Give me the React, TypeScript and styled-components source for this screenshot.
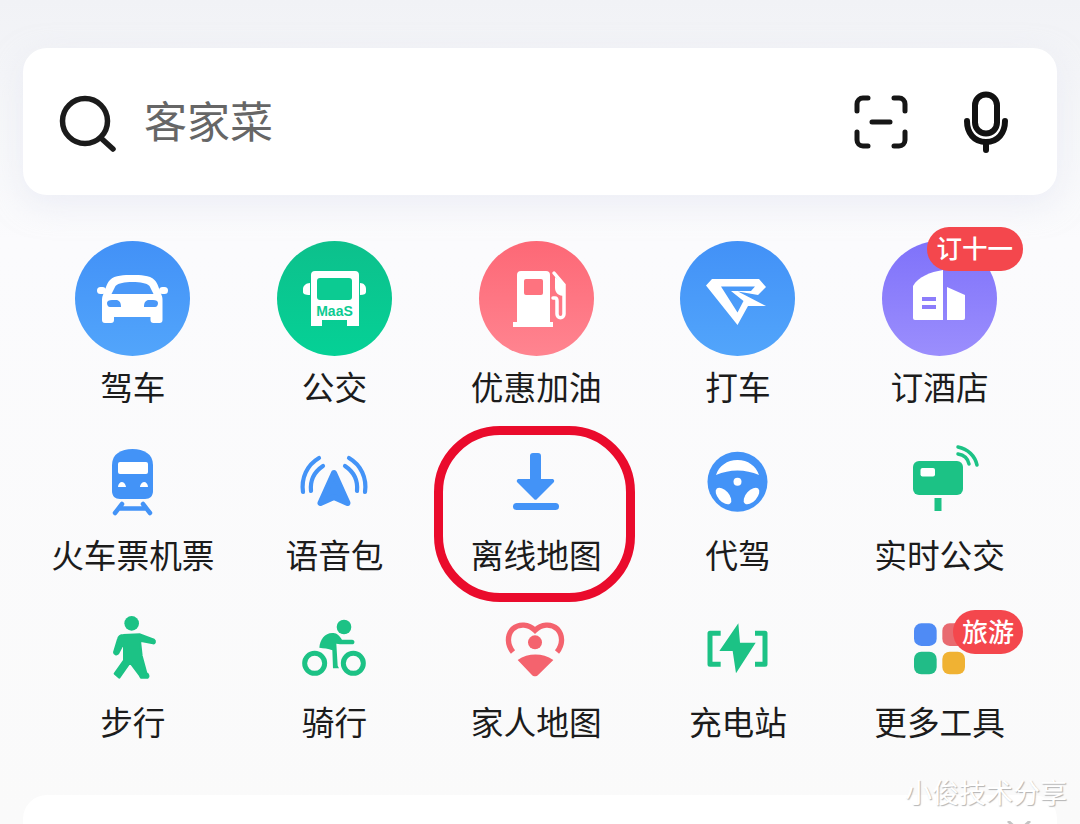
import React from "react";
import styled, { createGlobalStyle } from "styled-components";

const GlobalStyle = createGlobalStyle`
  html, body {
    margin: 0;
    height: 824px;
    overflow: hidden;
    font-family: "Noto Sans CJK SC", "Noto Sans", sans-serif;
  }
`;

const GREEN = "#1cc285";
const BLUE = "#4393f7";

//Icones dentro dos discos (viewBox 115)
const CarIcon = () => (
  <DiscSvg viewBox="0 0 115 115">
    <rect x="22" y="46" width="9" height="7" rx="3.5" fill="#fff" />
    <rect x="84" y="46" width="9" height="7" rx="3.5" fill="#fff" />
    <path fill="#fff" d="M57.500 34c8 0 17 0 22 5 2 2 3 4 4 7l3 8c1 2 1 4 1 6v19a3 3 0 0 1-3 3h-6a3 3 0 0 1-3-3v-3H39v3a3 3 0 0 1-3 3h-6a3 3 0 0 1-3-3V60c0-2 0-4 1-6l3-8c1-3 2-5 4-7 5-5 14-5 22.500-5z" />
    <path fill="#4a98f8" d="M57.500 41c8 0 14 1 17 4l4 8H36.500l4-8c3-3 9-4 17-4z" />
    <path fill="#4a98f8" d="M32 62c0-2 2-3 5-3h4c3 0 5 2 5 7H35c-2 0-3-2-3-4zM83 62c0-2-2-3-5-3h-4c-3 0-5 2-5 7h11c2 0 3-2 3-4z" />
  </DiscSvg>
);

const BusIcon = () => (
  <DiscSvg viewBox="0 0 115 115">
    <path fill="#fff" d="M33 42c-4 0-7 3-7 6v3c0 2 2 3 7 3zM83 42c4 0 6 3 6 6v3c0 2-2 3-6 3z" />
    <path fill="#fff" d="M38 30h40a4 4 0 0 1 4 4v51H70v-6H45v6H34V34a4 4 0 0 1 4-4z" />
    <rect x="40" y="37" width="35" height="22" rx="3" fill="#0ccb92" />
    <BusText x="57.5" y="74.500">MaaS</BusText>
  </DiscSvg>
);

const FuelIcon = () => (
  <DiscSvg viewBox="0 0 115 115">
    <path fill="#fff" d="M42 30h25a4 4 0 0 1 4 4v47h3v5H34v-5h4V34a4 4 0 0 1 4-4z" />
    <rect x="45" y="38" width="19" height="16" rx="2" fill="#fe737f" />
    <path fill="none" stroke="#fff" strokeWidth="3.5" strokeLinecap="round" d="M74 57h2c1.500 0 2 1 2 3v13c0 5 7 5 7 0V44l-10-12" />
    <path fill="#fff" d="M76 36l9 8v11c-5 0-9-3-9-8z" />
  </DiscSvg>
);

const TaxiIcon = () => (
  <DiscSvg viewBox="0 0 115 115">
    <path fill="#fff" fillRule="evenodd" d="M26 44.500L32 38h47l7 8-8 8-20-3.500L86 65H68L57.500 84zM41 45.500l16.500 26 6-11.500L51 50h20l4-4.500z" />
  </DiscSvg>
);

const HotelIcon = () => (
  <DiscSvg viewBox="0 0 115 115">
    <path fill="#fff" d="M31 45C36 36 48 31 61 29v50H33a2 2 0 0 1-2-2z" />
    <path fill="#fff" d="M65 46l18 8v23a2 2 0 0 1-2 2H65z" />
    <rect x="40" y="56" width="14" height="4" fill="#8c7dfb" />
    <rect x="40" y="64" width="14" height="4" fill="#8c7dfb" />
  </DiscSvg>
);

//Icones pequenos (slot de 80x80, viewBox nas coordenadas do recorte)
const TrainIcon = () => (
  <SmallSvg viewBox="0 0 80 80">
    <path fill={BLUE} d="M19 25C19 14 28 9 39.500 9S60 14 60 25v26c0 5-3 8-8 8H27c-5 0-8-3-8-8z" />
    <rect x="25" y="22" width="30" height="12" rx="2" fill="#fff" />
    <path fill="#fff" d="M25 47c0-3 2-5 4-5s4 3 4 5zM47 47c0-2 2-5 4-5s4 2 4 5z" />
    <path fill="none" stroke={BLUE} strokeWidth="4.500" strokeLinecap="round" d="M29 64l-7 9M50 64l7 9M27 68.500h25" />
  </SmallSvg>
);

const VoiceIcon = () => (
  <SmallSvg viewBox="0 0 80 80">
    <path fill={BLUE} stroke={BLUE} strokeWidth="6" strokeLinejoin="round" d="M39 33L25.500 63 39 57l13.500 6z" />
    <path fill="none" stroke={BLUE} strokeWidth="4.200" strokeLinecap="round" d="M8 52C6 38 12 25 24 18M16 51c-1-10 3-19 12-25M70 52c2-14-4-27-16-34M62 51c1-10-3-19-12-25" />
  </SmallSvg>
);

const DownloadIcon = () => (
  <SmallSvg viewBox="0 0 80 80">
    <path fill={BLUE} d="M34 16a3 3 0 0 1 3-3h5a3 3 0 0 1 3 3v23h11c2 0 3 2 1.500 3.500L41 59a2 2 0 0 1-3 0L21.500 42.500C20 41 21 39 23 39h11z" />
    <rect x="17" y="63" width="46" height="7" rx="3.500" fill={BLUE} />
  </SmallSvg>
);

const WheelIcon = () => (
  <SmallSvg viewBox="0 0 80 80">
    <circle cx="39.500" cy="41.700" r="30" fill={BLUE} />
    <path fill="#fff" d="M18 35c3-9 11-15 21.500-15S58 26 61 35c-7-3-14-4.500-21.500-4.500S25 32 18 35z" />
    <ellipse cx="25.500" cy="56" rx="10" ry="5.500" transform="rotate(48 25.500 56)" fill="#fff" />
    <ellipse cx="53.500" cy="56" rx="10" ry="5.500" transform="rotate(-48 53.500 56)" fill="#fff" />
    <circle cx="39.500" cy="41.700" r="4" fill="#fff" />
  </SmallSvg>
);

const StopIcon = () => (
  <SmallSvg viewBox="0 0 80 80">
    <rect x="13" y="21" width="50" height="34" rx="6" fill={GREEN} />
    <rect x="20.500" y="28" width="14.500" height="8.500" rx="2" fill="#fff" />
    <rect x="34.500" y="58" width="7" height="13" fill={GREEN} />
    <path fill="none" stroke={GREEN} strokeWidth="3.500" strokeLinecap="round" d="M58 7c10 2 17 9 19 18M58 14c6 1 10 5 11 10" />
  </SmallSvg>
);

const WalkIcon = () => (
  <SmallSvg viewBox="9 6 240 240">
    <circle cx="125" cy="55" r="22" fill={GREEN} />
    <path fill={GREEN} stroke={GREEN} strokeWidth="6" strokeLinejoin="round" d="M100 90l50-2 42 16c5 4 3 12-3 11l-39-8 5 45 14 52c6 3 9 10 4 14h-20l-6-10-27-36-32 46-14-12 28-40V112l-18 34c-4 4-12 2-12-4l12-40c2-8 8-12 16-12z" />
  </SmallSvg>
);

const BikeIcon = () => (
  <SmallSvg viewBox="613 6 240 240">
    <circle cx="760" cy="66" r="22" fill={GREEN} />
    <circle cx="672" cy="175" r="30" fill="none" stroke={GREEN} strokeWidth="15" />
    <circle cx="788" cy="175" r="30" fill="none" stroke={GREEN} strokeWidth="15" />
    <path fill={GREEN} d="M686 128c2-26 18-46 42-44 12 1 18 8 26 20h30c10 0 10 14 0 14h-36l-11-2 4 66 4 8h-18l-2-54c-12-6-26-6-39-8z" />
  </SmallSvg>
);

const FamilyIcon = () => (
  <SmallSvg viewBox="18 6 240 240">
    <path fill="none" stroke="#f4636e" strokeWidth="16" d="M69 141C52 120 50 92 68 72c20-18 48-14 67 4 19-18 47-22 67 -4 18 20 16 48-1 69" />
    <circle cx="135" cy="112" r="21" fill="#f4636e" />
    <path fill="#f4636e" d="M83 165c32-22 74-22 107 0l-45 44c-6 6-14 6-20 0z" />
  </SmallSvg>
);

const ChargeIcon = () => (
  <SmallSvg viewBox="624 6 240 240">
    <path fill="none" stroke={GREEN} strokeWidth="15" strokeLinejoin="round" d="M692 85h-32v93h32M795 85h30v93h-30" />
    <path fill={GREEN} d="M745 55l-57 83h40l10 67 59-92h-47z" />
  </SmallSvg>
);

const MoreIcon = () => (
  <SmallSvg viewBox="30 21 240 240">
    <rect x="72" y="70" width="68" height="68" rx="22" fill="#4f8bf5" />
    <rect x="157" y="70" width="68" height="68" rx="22" fill="#e86a70" />
    <rect x="72" y="155" width="68" height="68" rx="22" fill="#21bc87" />
    <rect x="157" y="155" width="68" height="68" rx="22" fill="#f0b233" />
  </SmallSvg>
);

type Tool = {
  label: string;
  icon: React.ReactNode;
  disc?: [string, string];
  badge?: string;
  small?: boolean;
  marked?: boolean;
};

const tools: Tool[] = [
  { label: "驾车", icon: <CarIcon />, disc: ["#4291f7", "#52a5fb"] },
  { label: "公交", icon: <BusIcon />, disc: ["#0dc08c", "#05d196"] },
  { label: "优惠加油", icon: <FuelIcon />, disc: ["#fd6876", "#ff8490"] },
  { label: "打车", icon: <TaxiIcon />, disc: ["#4291f7", "#52a5fb"] },
  { label: "订酒店", icon: <HotelIcon />, disc: ["#7f72fa", "#9b8efd"], badge: "订十一" },
  { label: "火车票机票", icon: <TrainIcon /> },
  { label: "语音包", icon: <VoiceIcon /> },
  { label: "离线地图", icon: <DownloadIcon />, marked: true },
  { label: "代驾", icon: <WheelIcon /> },
  { label: "实时公交", icon: <StopIcon /> },
  { label: "步行", icon: <WalkIcon /> },
  { label: "骑行", icon: <BikeIcon /> },
  { label: "家人地图", icon: <FamilyIcon /> },
  { label: "充电站", icon: <ChargeIcon /> },
  { label: "更多工具", icon: <MoreIcon />, badge: "旅游", small: true },
];

export default function App() {
  return (
    <Page>
      <GlobalStyle />

      <SearchBar>
        <svg width="60" height="60" viewBox="0 0 60 60" fill="none" stroke="#1b1b1b" strokeWidth="5.500" strokeLinecap="round">
          <circle cx="27" cy="29" r="22.500" />
          <path d="M44 47l11 10" />
        </svg>
        <SearchText>客家菜</SearchText>
        <SearchActions>
          <svg width="54" height="54" viewBox="0 0 54 54" fill="none" stroke="#161616" strokeWidth="5" strokeLinecap="round">
            <path d="M3 16V9a6 6 0 0 1 6-6h5M40 3h5a6 6 0 0 1 6 6v7M3 37v8a6 6 0 0 0 6 6h5M40 51h5a6 6 0 0 0 6-6v-8M18 27h18" />
          </svg>
          <svg width="44" height="62" viewBox="0 0 44 62" fill="none" stroke="#111" strokeWidth="6" strokeLinecap="round">
            <rect x="11" y="3.500" width="22" height="39" rx="11" />
            <path d="M3 30c0 12 7 21 19 21s19-9 19-21M22 51v8" />
          </svg>
        </SearchActions>
      </SearchBar>

      <ToolGrid>
        {tools.map((t, idx) => (
          <ToolCell key={idx}>
            <IconSlot>
              {t.disc ? <Disc $from={t.disc[0]} $to={t.disc[1]}>{t.icon}</Disc> : t.icon}
              {t.badge && <Badge $small={t.small}>{t.badge}</Badge>}
            </IconSlot>
            <ToolLabel>{t.label}</ToolLabel>
            {t.marked && <MarkRing />}
          </ToolCell>
        ))}
      </ToolGrid>

      <BottomCard>
        <svg width="26" height="14" viewBox="0 0 26 14" fill="none" stroke="#c4c4c4" strokeWidth="3">
          <path d="M2 0l11 10L24 0" />
        </svg>
      </BottomCard>

      <Watermark>小俊技术分享</Watermark>
    </Page>
  );
}

//Styled Components
const Page = styled.main`
  position: relative;
  width: 1080px;
  height: 824px;
  overflow: hidden;
  box-sizing: border-box;
  padding: 48px 23px 0;
  background: linear-gradient(#f1f2f6 0, #f7f8fa 150px, #fbfbfd 240px, #fafafa 100%);
`;

const SearchBar = styled.section`
  display: flex;
  align-items: center;
  height: 147px;
  box-sizing: border-box;
  padding: 0 49px 0 35px;
  background: #fff;
  border-radius: 24px;
  box-shadow: 0 10px 30px rgba(225, 228, 242, 0.5);
`;

const SearchText = styled.span`
  margin: -5px 0 0 26px;
  font-size: 43px;
  line-height: 60px;
  color: #666;
`;

const SearchActions = styled.div`
  margin-left: auto;
  display: flex;
  align-items: center;
  gap: 56px;
`;

const ToolGrid = styled.section`
  margin: 46px 0 0 9px;
  display: grid;
  grid-template-columns: repeat(5, 201.7px);
  grid-auto-rows: 167.5px;
`;

const ToolCell = styled.div`
  position: relative;
  display: flex;
  flex-direction: column;
  align-items: center;
`;

const IconSlot = styled.div`
  position: relative;
  width: 115px;
  height: 115px;
  display: flex;
  justify-content: center;
  align-items: flex-end;
`;

const Disc = styled.div<{ $from: string; $to: string }>`
  width: 115px;
  height: 115px;
  border-radius: 50%;
  background: linear-gradient(${(p) => p.$from}, ${(p) => p.$to});
`;

const DiscSvg = styled.svg`
  display: block;
  width: 115px;
  height: 115px;
`;

const SmallSvg = styled.svg`
  display: block;
  width: 80px;
  height: 80px;
  margin-bottom: 4px;
`;

const BusText = styled.text`
  font-family: "Liberation Sans", sans-serif;
  font-size: 14px;
  font-weight: 700;
  fill: #0ccb92;
  text-anchor: middle;
`;

const Badge = styled.span<{ $small?: boolean }>`
  position: absolute;
  top: ${(p) => (p.$small ? "34px" : "-14px")};
  right: -26px;
  padding: 0 ${(p) => (p.$small ? "9px" : "10px")} ${(p) => (p.$small ? "2px" : "5px")};
  height: 44px;
  box-sizing: border-box;
  line-height: ${(p) => (p.$small ? "42px" : "39px")};
  font-size: ${(p) => (p.$small ? "26px" : "25.500px")};
  font-weight: 500;
  color: #fff;
  background: #f4474d;
  border-radius: 22px;
  white-space: nowrap;
`;

const ToolLabel = styled.span`
  margin-top: 10px;
  font-size: 32.700px;
  line-height: 40px;
  color: #1c1c1c;
  white-space: nowrap;
`;

const MarkRing = styled.div`
  position: absolute;
  left: -1px;
  top: 17px;
  width: 201px;
  height: 176px;
  box-sizing: border-box;
  border: 9px solid #ea0b2c;
  border-radius: 66px;
  pointer-events: none;
`;

const BottomCard = styled.section`
  margin-top: 51px;
  height: 120px;
  box-sizing: border-box;
  padding: 26px 25px 0 0;
  display: flex;
  justify-content: flex-end;
  align-items: flex-start;
  background: #fff;
  border-radius: 24px;
`;

const Watermark = styled.span`
  position: absolute;
  right: 13px;
  bottom: 13px;
  font-size: 27px;
  line-height: 38px;
  color: #fff;
  text-shadow: 1px 1px 1px rgba(120, 120, 120, 0.55);
`;
